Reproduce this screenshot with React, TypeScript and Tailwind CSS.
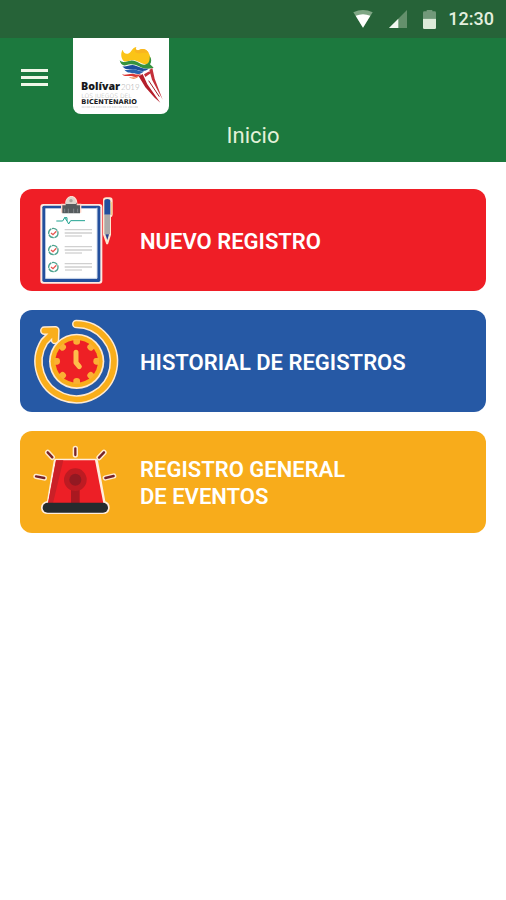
import type { ReactNode } from "react";
import clsx from "clsx";

function WifiIcon() {
  return (
    <svg viewBox="0 0 60 54" className="h-[18px] w-5" aria-hidden>
      <path d="M1 7 Q30 -7 59 7 L30 53Z" fill="#7fa685" />
      <path d="M8 17 Q30 8 52 17 L30 53Z" fill="#fff" />
    </svg>
  );
}

function SignalIcon() {
  return (
    <svg viewBox="0 0 54 54" className="h-[18px] w-[18px]" aria-hidden>
      <path d="M54 0V54H0Z" fill="#64906c" />
      <path d="M28 26V54H0Z" fill="#f2f7f1" />
    </svg>
  );
}

function BatteryIcon() {
  return (
    <svg viewBox="0 0 39 57" className="h-[19px] w-[13px]" aria-hidden>
      <path d="M11 0H28V4H35Q39 4 39 8V26H0V8Q0 4 4 4H11Z" fill="#72997a" />
      <path d="M0 26H39V53Q39 57 35 57H4Q0 57 0 53Z" fill="#dcebd9" />
    </svg>
  );
}

function BolivarLogo() {
  return (
    <svg viewBox="39 24 288 228" className="block h-[76px] w-24" role="img" aria-label="Bolívar 2019, Los Juegos del Bicentenario">
      {/* Flama */}
      <path
        d="M190 92C181 80 183 67 188 59C190 68 196 73 204 71C216 67 214 54 229 51C225 58 229 62 237 60C248 54 260 57 266 69C270 75 272 84 270 92C268 100 262 104 252 102C238 99 232 90 216 91C205 92 197 98 190 92Z"
        fill="#fbc417"
      />
      <path d="M229 51C225 58 229 62 237 60C248 54 260 57 266 69C252 66 243 71 233 70C224 69 221 60 229 51Z" fill="#f9b51f" />
      <path
        d="M179 91C188 101 200 93 212 92C232 90 238 105 254 104C266 103 270 92 269 79C275 85 275 97 270 103L281 113C262 119 248 116 237 109C225 102 209 101 200 105C189 109 181 102 179 91Z"
        fill="#36933e"
      />
      <path d="M187 109C200 112 212 101 227 107C241 112 250 118 266 116C257 124 245 124 232 120C215 115 200 125 187 109Z" fill="#1d4f9e" />
      <path d="M193 119C207 123 217 113 231 120C238 124 246 125 252 123C244 133 232 134 223 130C212 127 203 131 193 119Z" fill="#2b63ad" />
      <path d="M186 133C201 137 209 128 222 132C231 135 237 134 243 131C238 141 227 143 217 139C207 135 196 143 186 133Z" fill="#dd3834" />
      <path d="M207 142C218 142 226 145 236 139C231 147 217 149 207 142Z" fill="#ee6d2b" />

      {/* Antorcha */}
      <path d="M238 138L275 116L307 210L300 216Z" fill="#fff" />
      <path d="M236 139L248 132L262 163L301 218L284 203L256 172Z" fill="#b51f2b" />
      <path d="M268 120L277 114L284 146L308 209L296 187L276 149Z" fill="#c4303a" />
      <path d="M252 133L268 124L272 130L256 141Z" fill="#c4303a" />
      <path d="M266 152L298 200" stroke="#a31e28" strokeWidth="3" />

      <text x="63" y="181" className="fill-[#17191c] font-['Open_Sans'] text-[32px] font-extrabold">
        Bolívar
      </text>
      <text x="183" y="181" className="fill-[#a7a7a7] font-['Lato'] text-[24px] font-light">
        2019
      </text>
      <text x="64" y="204" className="fill-[#a8a8a8] font-['DejaVu_Sans'] text-[18px] font-light">
        LOS JUEGOS DEL
      </text>
      <text x="64" y="223" className="fill-[#17191c] font-['DejaVu_Sans'] text-[20px] font-bold">
        BICENTENARIO
      </text>
      <path d="M65 231H234" stroke="#bbb" strokeWidth="2" strokeDasharray="9 2 4 1" />
    </svg>
  );
}

function ClipboardIcon() {
  return (
    <svg viewBox="15 27 360 306" className="h-[102px] w-[120px] shrink-0" aria-hidden>
      <rect x="76" y="72" width="186" height="239" rx="9" fill="#ffe9e0" />
      <rect x="82" y="77" width="174" height="229" rx="5" fill="#234f9d" />
      <rect x="91" y="85" width="155" height="210" fill="#fff" />
      <path d="M246 83V295H91" fill="none" stroke="#d5dfed" strokeWidth="3" />
      <path d="M138 98V71H150C152 40 188 40 187 71H199V98Z" fill="#ffd8cc" />
      <path d="M142 100V76H152V68H185V76H195V100Z" fill="#555b5d" />
      <path d="M153 72C152 44 184 44 183 72Z" fill="#ddd4cc" />
      <circle cx="168" cy="62" r="5" fill="#a8a29b" />
      <path d="M149 97V86M160 99V86M176 99V86M188 97V86" stroke="#80868a" strokeWidth="3" />

      <path d="M124 123H143L149 113L156 123L161 132L167 122H210" fill="none" stroke="#20a391" strokeWidth="3" />
      <path d="M148 113H156V123" fill="none" stroke="#20a391" strokeWidth="3" />

      {[159, 210, 261].map((cy) => (
        <g key={cy}>
          <circle cx="115" cy={cy} r="14" fill="#fff" stroke="#4ba18d" strokeWidth="4" strokeDasharray="18 2" />
          <path d={`M108 ${cy}L114 ${cy + 5}L124 ${cy - 5}`} fill="none" stroke="#e65750" strokeWidth="4" />
          <path d={`M149 ${cy - 10}H231M149 ${cy}H231`} stroke="#d0d0d0" strokeWidth="4" />
          <path d={`M150 ${cy + 9}H201`} stroke="#c2c2c2" strokeWidth="3" />
        </g>
      ))}

      {/* Lapicero */}
      <path
        d="M264 60Q264 52 274 52H284Q293 52 293 62V103Q293 110 288 112V164L279 193H274L264 164Z"
        fill="#ffe6cf"
      />
      <path d="M268 63Q268 57 277 57Q286 57 286 63V104H268Z" fill="#204e9d" />
      <path d="M268 104H285V163H268Z" fill="#aaa9a8" />
      <path d="M268 163H285L277 184Z" fill="#e9dfd6" />
      <path d="M271 163H282L277 180Z" fill="#273e86" />
      <path d="M286 68H290V105" fill="none" stroke="#f3cb78" strokeWidth="3" />
    </svg>
  );
}

function HistoryIcon() {
  return (
    <svg viewBox="15 27 360 306" className="h-[102px] w-[120px] shrink-0" aria-hidden>
      <g fill="none" strokeLinecap="round" strokeLinejoin="round">
        <path d="M184 69A113 113 0 1 1 88 122L119 91M88 89L121 88L120 117" stroke="#ffead0" strokeWidth="26" />
        <path d="M184 69A113 113 0 1 1 88 122L119 91M88 89L121 88L120 117" stroke="#f9ae1b" strokeWidth="17" />
      </g>
      <circle cx="185" cy="181" r="83" fill="#ffead0" />
      <circle cx="185" cy="181" r="78" fill="#f9ae1b" />
      <circle cx="185" cy="181" r="64" fill="#ee2025" />
      {[0, 45, 90, 135, 180, 225, 270, 315].map((angle) => (
        <path
          key={angle}
          d="M175 114V123Q175 131 185 131Q195 131 195 123V114Z"
          transform={`rotate(${angle} 185 181)`}
          fill="#fbb034"
        />
      ))}
      <path d="M183 154V185L193 197" fill="none" stroke="#ffbd4b" strokeWidth="15" strokeLinecap="round" strokeLinejoin="round" />
    </svg>
  );
}

function SirenIcon() {
  const rays = "M181 70V90M98 82L112 97M267 82L252 98M63 154L88 159M296 153L271 159";
  return (
    <svg viewBox="15 18 360 306" className="h-[102px] w-[120px] shrink-0" aria-hidden>
      <g fill="none" strokeLinecap="round">
        <path d={rays} stroke="#ffebcf" strokeWidth="16" />
        <path d={rays} stroke="#76222b" strokeWidth="7" />
      </g>
      <path
        d="M122 101H242Q247 101 249 107L271 229Q284 234 284 247Q284 267 263 267H99Q78 267 78 247Q78 233 96 228L116 108Q117 101 122 101Z"
        fill="#ffeddc"
      />
      <path d="M123 106H240L265 235H99Z" fill="#ed1f26" />
      <path d="M123 106H145L114 235H99Z" fill="#ca2027" />
      <path d="M168 189H194V235H168Z" fill="#a91820" />
      <circle cx="181" cy="164" r="34" fill="#bd1b22" />
      <circle cx="181" cy="164" r="18" fill="#921922" />
      <rect x="83" y="233" width="196" height="30" rx="15" fill="#252b2e" />
    </svg>
  );
}

interface MenuCardProps {
  icon: ReactNode;
  className: string;
  children: ReactNode;
}

function MenuCard({ icon, className, children }: MenuCardProps) {
  return (
    <button
      type="button"
      className={clsx(
        "flex w-full items-center overflow-hidden rounded-xl text-left text-[22px] leading-[27px] font-semibold text-white",
        className
      )}
    >
      {icon}
      <span className="pt-0.5">{children}</span>
    </button>
  );
}

export default function App() {
  return (
    <div className="min-h-screen bg-white font-['Roboto',sans-serif]">
      {/* Barra de estado */}
      <div className="flex h-[38px] items-center justify-end bg-[#266338] pr-3 text-[#e4efdf]">
        <div className="mr-3 flex items-center gap-4">
          <WifiIcon />
          <SignalIcon />
          <BatteryIcon />
        </div>
        <span className="text-lg leading-5 font-medium">12:30</span>
      </div>

      <header className="bg-[#1c793e] pb-3">
        <div className="flex items-start pl-[21px]">
          <button type="button" aria-label="Abrir menú" className="mt-[31px] flex w-[27px] flex-col gap-1">
            <span className="h-[3px] bg-[#f0f7e8]" />
            <span className="h-[3px] bg-[#f0f7e8]" />
            <span className="h-[3px] bg-[#f0f7e8]" />
          </button>
          <div className="ml-[25px] overflow-hidden rounded-b-lg bg-white">
            <BolivarLogo />
          </div>
        </div>
        <h1 className="mt-2 text-center text-[22px] leading-7 text-[#e3f1d9]">Inicio</h1>
      </header>

      <main className="flex flex-col gap-[19px] px-5 pt-[27px]">
        <MenuCard icon={<ClipboardIcon />} className="bg-[#ef1e26]">
          NUEVO REGISTRO
        </MenuCard>
        <MenuCard icon={<HistoryIcon />} className="bg-[#2659a5]">
          HISTORIAL DE REGISTROS
        </MenuCard>
        <MenuCard icon={<SirenIcon />} className="bg-[#f8ac1b]">
          REGISTRO GENERAL
          <br />
          DE EVENTOS
        </MenuCard>
      </main>
    </div>
  );
}
